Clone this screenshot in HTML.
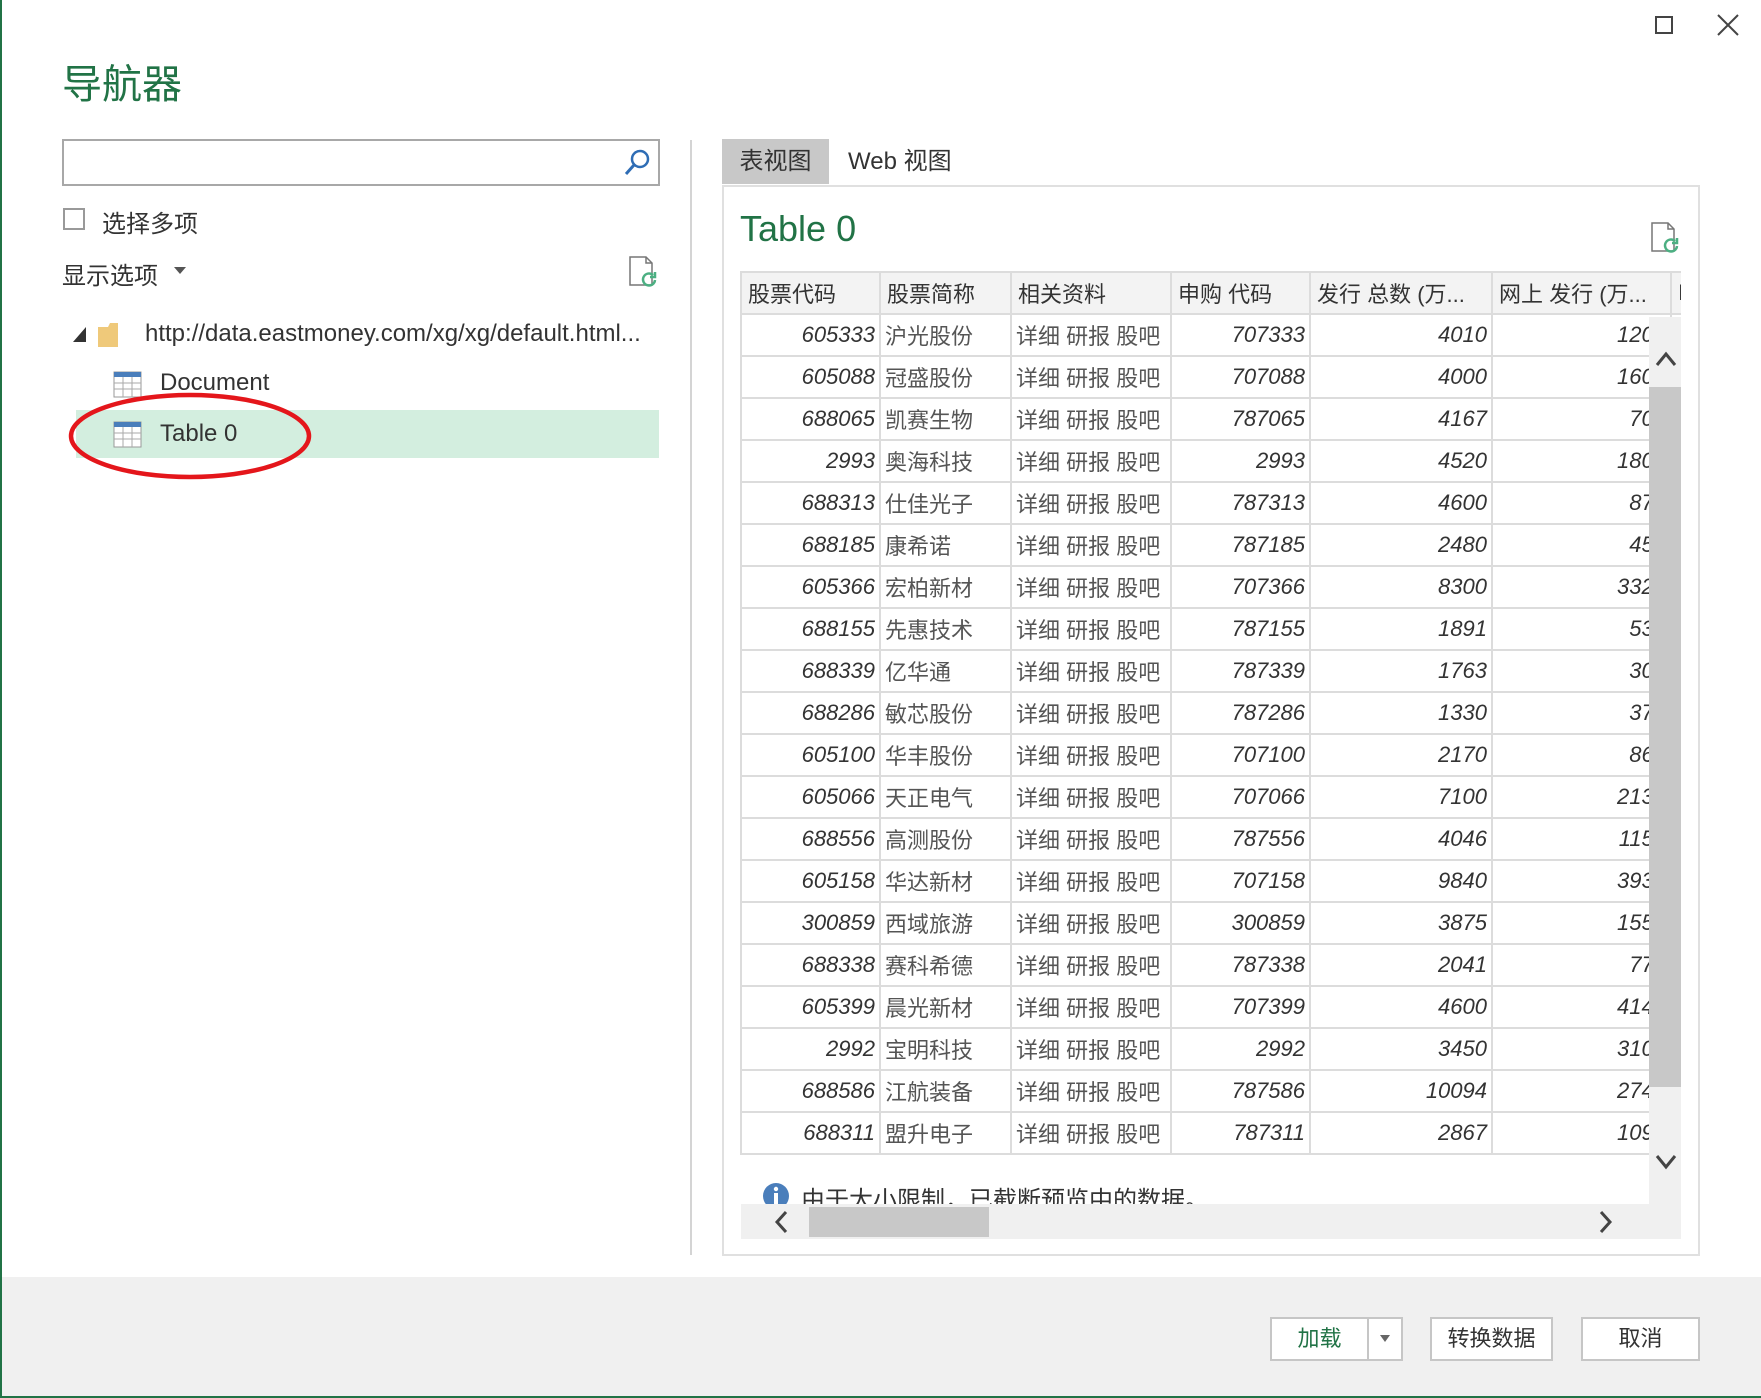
<!DOCTYPE html>
<html><head><meta charset="utf-8">
<style>
*{margin:0;padding:0;box-sizing:border-box}
body{width:1761px;height:1398px;position:relative;background:#fff;font-family:"Liberation Sans","Noto Sans CJK SC",sans-serif;color:#333;overflow:hidden}
.a{position:absolute}
table{border-collapse:collapse;table-layout:fixed;font-size:22px}
td,th{border:2px solid #dcdcdc;height:42px;padding:0 6px;white-space:nowrap;overflow:hidden}
th{background:#f3f3f3;font-weight:normal;text-align:left;height:42px;color:#333}
td.n{text-align:right;font-style:italic;padding-right:4px}
td.l{color:#555;padding-left:4px}
.btn{position:absolute;border:2px solid #c6c6c6;background:#fff;font-size:22px;text-align:center;line-height:40px;color:#333}
</style></head><body>
<div class="a" style="left:0;top:0;width:2px;height:1398px;background:#217346"></div>
<div class="a" style="left:0;top:1396px;width:1761px;height:2px;background:#217346"></div>

<div class="a" style="left:62px;top:52px;font-size:40px;color:#217346">导航器</div>
<!-- window controls -->
<div class="a" style="left:1655px;top:16px;width:18px;height:18px;border:2px solid #444"></div>
<svg class="a" style="left:1716px;top:13px" width="24" height="24"><path d="M2 2L22 22M22 2L2 22" stroke="#444" stroke-width="2"/></svg>

<!-- search -->
<div class="a" style="left:62px;top:139px;width:598px;height:47px;border:2px solid #a8a8a8"></div>
<svg class="a" style="left:622px;top:148px" width="30" height="30"><circle cx="18" cy="11" r="8" fill="none" stroke="#2f6db5" stroke-width="2.5"/><path d="M12 17L4 26" stroke="#2f6db5" stroke-width="3"/></svg>

<div class="a" style="left:63px;top:208px;width:22px;height:22px;border:2px solid #999"></div>
<div class="a" style="left:102px;top:204px;font-size:24px">选择多项</div>
<div class="a" style="left:62px;top:256px;font-size:24px">显示选项</div>
<svg class="a" style="left:174px;top:266px" width="12" height="10"><path d="M0 1H12L6 8Z" fill="#555"/></svg>
<svg class="a" style="left:628px;top:256px" width="32" height="34"><path d="M2 1H18L24 7V29H2Z" fill="none" stroke="#777" stroke-width="1.5"/><path d="M18 1V7H24" fill="none" stroke="#777" stroke-width="1.5"/><path d="M27 24A6 6 0 1 1 25 19M27 16V21H22" fill="none" stroke="#4caf82" stroke-width="2.5"/></svg>

<!-- tree -->
<svg class="a" style="left:73px;top:327px" width="14" height="16"><path d="M13 0V15H0Z" fill="#333"/></svg>
<svg class="a" style="left:98px;top:322px" width="28" height="26"><path d="M0 5H10L12 1H20V25H0Z" fill="#efc97a"/></svg>
<div class="a" style="left:145px;top:320px;font-size:24px">http://data.eastmoney.com/xg/xg/default.html...</div>

<div class="a" style="left:76px;top:410px;width:583px;height:48px;background:#d3eedf"></div>
<svg class="a" style="left:113px;top:371px" width="30" height="28"><rect x="1" y="1" width="27" height="25" fill="#fff" stroke="#999"/><rect x="1" y="1" width="27" height="5" fill="#4a7ebb"/><path d="M1 12H28M1 18H28M10 6V26M19 6V26" stroke="#aaa"/></svg>
<div class="a" style="left:160px;top:369px;font-size:24px">Document</div>
<svg class="a" style="left:113px;top:421px" width="30" height="28"><rect x="1" y="1" width="27" height="25" fill="#fff" stroke="#999"/><rect x="1" y="1" width="27" height="5" fill="#4a7ebb"/><path d="M1 12H28M1 18H28M10 6V26M19 6V26" stroke="#aaa"/></svg>
<div class="a" style="left:160px;top:420px;font-size:24px">Table 0</div>
<svg class="a" style="left:66px;top:390px" width="252" height="94"><ellipse cx="124" cy="46" rx="119" ry="41" fill="none" stroke="#e4161b" stroke-width="4.5"/></svg>

<div class="a" style="left:690px;top:140px;width:2px;height:1115px;background:#d4d4d4"></div>

<!-- tabs -->
<div class="a" style="left:722px;top:139px;width:107px;height:45px;background:#c8c8c8;font-size:24px;line-height:45px;text-align:center">表视图</div>
<div class="a" style="left:848px;top:139px;font-size:24px;line-height:45px">Web 视图</div>
<div class="a" style="left:722px;top:185px;width:978px;height:1071px;border:2px solid #e0e0e0"></div>
<div class="a" style="left:740px;top:208px;font-size:36px;color:#217346">Table 0</div>
<svg class="a" style="left:1650px;top:222px" width="32" height="34"><path d="M2 1H18L24 7V29H2Z" fill="none" stroke="#777" stroke-width="1.5"/><path d="M18 1V7H24" fill="none" stroke="#777" stroke-width="1.5"/><path d="M27 24A6 6 0 1 1 25 19M27 16V21H22" fill="none" stroke="#4caf82" stroke-width="2.5"/></svg>

<div class="a" style="left:740px;top:271px;width:941px;height:887px;overflow:hidden">
<table style="width:950px">
<colgroup><col style="width:139px"><col style="width:131px"><col style="width:160px"><col style="width:139px"><col style="width:182px"><col style="width:179px"><col style="width:20px"></colgroup>
<tr><th>股票代码</th><th>股票简称</th><th>相关资料</th><th>申购 代码</th><th>发行 总数 (万...</th><th>网上 发行 (万...</th><th>I</th></tr>
<tr><td class="n">605333</td><td class="l">沪光股份</td><td class="l">详细 研报 股吧</td><td class="n">707333</td><td class="n">4010</td><td class="n">1200</td><td></td></tr>
<tr><td class="n">605088</td><td class="l">冠盛股份</td><td class="l">详细 研报 股吧</td><td class="n">707088</td><td class="n">4000</td><td class="n">1600</td><td></td></tr>
<tr><td class="n">688065</td><td class="l">凯赛生物</td><td class="l">详细 研报 股吧</td><td class="n">787065</td><td class="n">4167</td><td class="n">708</td><td></td></tr>
<tr><td class="n">2993</td><td class="l">奥海科技</td><td class="l">详细 研报 股吧</td><td class="n">2993</td><td class="n">4520</td><td class="n">1808</td><td></td></tr>
<tr><td class="n">688313</td><td class="l">仕佳光子</td><td class="l">详细 研报 股吧</td><td class="n">787313</td><td class="n">4600</td><td class="n">874</td><td></td></tr>
<tr><td class="n">688185</td><td class="l">康希诺</td><td class="l">详细 研报 股吧</td><td class="n">787185</td><td class="n">2480</td><td class="n">455</td><td></td></tr>
<tr><td class="n">605366</td><td class="l">宏柏新材</td><td class="l">详细 研报 股吧</td><td class="n">707366</td><td class="n">8300</td><td class="n">3320</td><td></td></tr>
<tr><td class="n">688155</td><td class="l">先惠技术</td><td class="l">详细 研报 股吧</td><td class="n">787155</td><td class="n">1891</td><td class="n">539</td><td></td></tr>
<tr><td class="n">688339</td><td class="l">亿华通</td><td class="l">详细 研报 股吧</td><td class="n">787339</td><td class="n">1763</td><td class="n">300</td><td></td></tr>
<tr><td class="n">688286</td><td class="l">敏芯股份</td><td class="l">详细 研报 股吧</td><td class="n">787286</td><td class="n">1330</td><td class="n">379</td><td></td></tr>
<tr><td class="n">605100</td><td class="l">华丰股份</td><td class="l">详细 研报 股吧</td><td class="n">707100</td><td class="n">2170</td><td class="n">868</td><td></td></tr>
<tr><td class="n">605066</td><td class="l">天正电气</td><td class="l">详细 研报 股吧</td><td class="n">707066</td><td class="n">7100</td><td class="n">2130</td><td></td></tr>
<tr><td class="n">688556</td><td class="l">高测股份</td><td class="l">详细 研报 股吧</td><td class="n">787556</td><td class="n">4046</td><td class="n">1153</td><td></td></tr>
<tr><td class="n">605158</td><td class="l">华达新材</td><td class="l">详细 研报 股吧</td><td class="n">707158</td><td class="n">9840</td><td class="n">3936</td><td></td></tr>
<tr><td class="n">300859</td><td class="l">西域旅游</td><td class="l">详细 研报 股吧</td><td class="n">300859</td><td class="n">3875</td><td class="n">1550</td><td></td></tr>
<tr><td class="n">688338</td><td class="l">赛科希德</td><td class="l">详细 研报 股吧</td><td class="n">787338</td><td class="n">2041</td><td class="n">777</td><td></td></tr>
<tr><td class="n">605399</td><td class="l">晨光新材</td><td class="l">详细 研报 股吧</td><td class="n">707399</td><td class="n">4600</td><td class="n">4140</td><td></td></tr>
<tr><td class="n">2992</td><td class="l">宝明科技</td><td class="l">详细 研报 股吧</td><td class="n">2992</td><td class="n">3450</td><td class="n">3100</td><td></td></tr>
<tr><td class="n">688586</td><td class="l">江航装备</td><td class="l">详细 研报 股吧</td><td class="n">787586</td><td class="n">10094</td><td class="n">2746</td><td></td></tr>
<tr><td class="n">688311</td><td class="l">盟升电子</td><td class="l">详细 研报 股吧</td><td class="n">787311</td><td class="n">2867</td><td class="n">1099</td><td></td></tr>
</table></div>

<!-- vertical scrollbar -->
<div class="a" style="left:1649px;top:317px;width:32px;height:922px;background:#f0f0f0"></div>
<div class="a" style="left:1649px;top:387px;width:32px;height:700px;background:#c8c8c8"></div>
<svg class="a" style="left:1655px;top:350px" width="22" height="18"><path d="M2 15L11 4L20 15" fill="none" stroke="#444" stroke-width="3"/></svg>
<svg class="a" style="left:1655px;top:1153px" width="22" height="18"><path d="M2 3L11 14L20 3" fill="none" stroke="#444" stroke-width="3"/></svg>

<!-- info -->
<div class="a" style="left:741px;top:1158px;width:908px;height:46px;overflow:hidden">
<svg class="a" style="left:21px;top:24px" width="28" height="28"><circle cx="14" cy="14" r="13" fill="#4a7ebb"/><rect x="12" y="11" width="4" height="12" fill="#fff"/><circle cx="14" cy="7" r="2.2" fill="#fff"/></svg>
<div class="a" style="left:60px;top:22px;font-size:24px">由于大小限制，已截断预览中的数据。</div>
</div>

<!-- horizontal scrollbar -->
<div class="a" style="left:741px;top:1204px;width:908px;height:35px;background:#f0f0f0"></div>
<div class="a" style="left:809px;top:1207px;width:180px;height:30px;background:#c8c8c8"></div>
<svg class="a" style="left:773px;top:1210px" width="18" height="24"><path d="M13 2L4 12L13 22" fill="none" stroke="#444" stroke-width="3"/></svg>
<svg class="a" style="left:1596px;top:1210px" width="18" height="24"><path d="M5 2L14 12L5 22" fill="none" stroke="#444" stroke-width="3"/></svg>

<!-- footer -->
<div class="a" style="left:2px;top:1277px;width:1759px;height:119px;background:#f0f0f0"></div>
<div class="btn" style="left:1270px;top:1317px;width:133px;height:44px"></div>
<div class="a" style="left:1270px;top:1317px;width:99px;height:44px;font-size:22px;line-height:44px;text-align:center;color:#217346">加载</div>
<div class="a" style="left:1367px;top:1319px;width:2px;height:40px;background:#c6c6c6"></div>
<svg class="a" style="left:1379px;top:1334px" width="12" height="10"><path d="M1 1H11L6 8Z" fill="#666"/></svg>
<div class="btn" style="left:1430px;top:1317px;width:123px;height:44px">转换数据</div>
<div class="btn" style="left:1581px;top:1317px;width:119px;height:44px">取消</div>
</body></html>
